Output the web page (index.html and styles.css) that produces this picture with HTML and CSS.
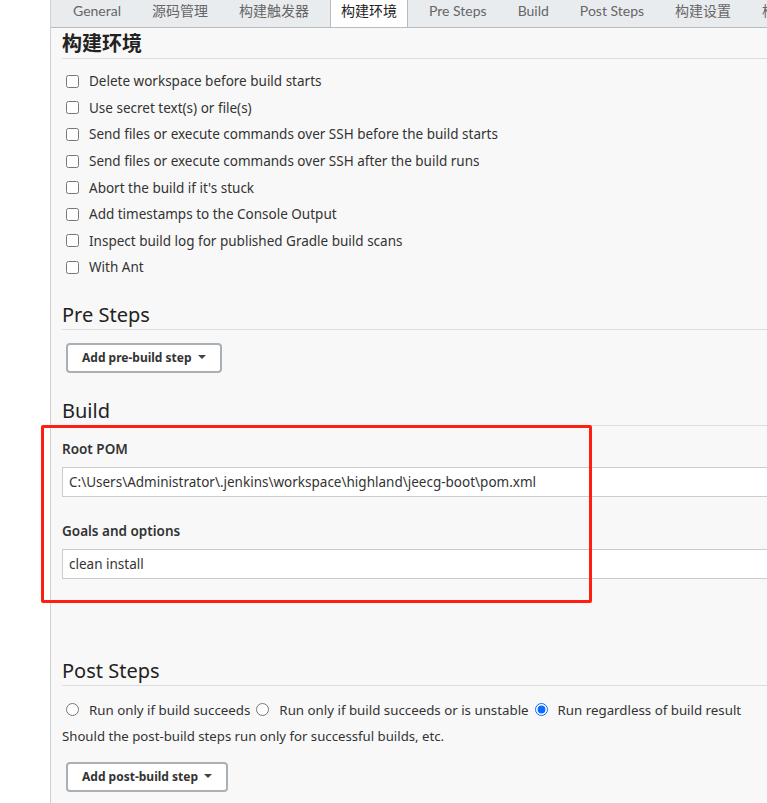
FILE: index.html
```html
<!DOCTYPE html>
<html lang="zh-CN">
<head>
    <meta charset="UTF-8">
    <title>Configure</title>
    <link rel="stylesheet" href="styles.css">
</head>
<body>
    <div class="side"></div>
    <div class="main">
        <div class="tabs">
            <span class="tab">General</span>
            <span class="tab">源码管理</span>
            <span class="tab">构建触发器</span>
            <span class="tab active">构建环境</span>
            <span class="tab">Pre Steps</span>
            <span class="tab">Build</span>
            <span class="tab">Post Steps</span>
            <span class="tab">构建设置</span>
            <span class="tab">构建后操作</span>
        </div>

        <div class="content">
            <h2 class="section-title first">构建环境</h2>
            <ul class="options">
                <li><label><input type="checkbox"> Delete workspace before build starts</label></li>
                <li><label><input type="checkbox"> Use secret text(s) or file(s)</label></li>
                <li><label><input type="checkbox"> Send files or execute commands over SSH before the build starts</label></li>
                <li><label><input type="checkbox"> Send files or execute commands over SSH after the build runs</label></li>
                <li><label><input type="checkbox"> Abort the build if it's stuck</label></li>
                <li><label><input type="checkbox"> Add timestamps to the Console Output</label></li>
                <li><label><input type="checkbox"> Inspect build log for published Gradle build scans</label></li>
                <li><label><input type="checkbox"> With Ant</label></li>
            </ul>

            <h2 class="section-title pre">Pre Steps</h2>
            <button class="add-btn">Add pre-build step <span class="caret"></span></button>

            <h2 class="section-title build">Build</h2>
            <div class="build-fields">
                <div class="field-label">Root POM</div>
                <input class="text-input" type="text" value="C:\Users\Administrator\.jenkins\workspace\highland\jeecg-boot\pom.xml">
                <div class="field-label second">Goals and options</div>
                <input class="text-input" type="text" value="clean install">
                <div class="highlight"></div>
            </div>

            <h2 class="section-title post">Post Steps</h2>
            <div class="radios">
                <label><input type="radio" name="post"> Run only if build succeeds</label>
                <label><input type="radio" name="post"> Run only if build succeeds or is unstable</label>
                <label><input type="radio" name="post" checked> Run regardless of build result</label>
            </div>
            <div class="help">Should the post-build steps run only for successful builds, etc.</div>
            <button class="add-btn post-btn">Add post-build step <span class="caret"></span></button>
        </div>
    </div>
</body>
</html>
```

FILE: styles.css
```css
body {
    margin: 0;
    display: flex;
    height: 803px;
    overflow: hidden;
    font-family: "Noto Sans", "Noto Sans CJK SC", sans-serif;
    font-size: 13.5px;
    color: #333;
    background: #fff;
}
.side {
    width: 50px;
    flex-shrink: 0;
    border-right: 1px solid #cfcfcf;
    background: #fff;
}
.main {
    flex: 1;
    min-width: 0;
    background: #f8f8f8;
}
.tabs {
    display: flex;
    height: 27px;
    padding-left: 12px;
    gap: 11px;
    background: #e9ecef;
    border-bottom: 1px solid #b7bcc1;
    white-space: nowrap;
    overflow: hidden;
}
.tab {
    padding: 0 10px;
    line-height: 21px;
    color: #666;
    font-family: Lato, "Noto Sans CJK SC", sans-serif;
    font-size: 14px;
    flex-shrink: 0;
}
.tab.active {
    background: #fff;
    color: #222;
    border-left: 1px solid #b7bcc1;
    border-right: 1px solid #b7bcc1;
    height: 28px;
}
.content {
    padding-left: 11px;
}
.section-title {
    margin: 0;
    font-size: 20px;
    font-weight: normal;
    line-height: 28px;
    color: #222;
    border-bottom: 1px solid #ddd;
}
.section-title.first {
    margin-top: 2px;
    font-weight: bold;
}
.section-title.pre {
    margin-top: 20px;
}
.section-title.build {
    margin-top: 24px;
}
.section-title.post {
    margin-top: 78px;
}
.options {
    list-style: none;
    margin: 9px 0 0;
    padding: 0;
}
.options li {
    height: 26.6px;
    display: flex;
    align-items: center;
}
label {
    display: inline-flex;
    align-items: center;
    white-space: nowrap;
}
input[type="checkbox"],
input[type="radio"] {
    margin: 0 10px 0 4px;
    width: 13px;
    height: 13px;
    accent-color: #0b6bff;
}
.add-btn {
    display: block;
    box-sizing: border-box;
    margin: 13px 0 0 4px;
    height: 30px;
    padding: 0 14px;
    background: #fff;
    border: 2px solid #a9b0b6;
    border-radius: 4px;
    font-family: inherit;
    font-size: 12px;
    font-weight: bold;
    color: #333;
}
.post-btn {
    margin-top: 16px;
}
.caret {
    display: inline-block;
    margin-left: 3px;
    vertical-align: middle;
    border-left: 4px solid transparent;
    border-right: 4px solid transparent;
    border-top: 4px solid #444;
    position: relative;
    top: -2px;
}
.build-fields {
    position: relative;
    padding-top: 13px;
}
.field-label {
    line-height: 20px;
    font-weight: 600;
    color: #333;
}
.field-label.second {
    margin-top: 24px;
}
.text-input {
    display: block;
    box-sizing: border-box;
    width: calc(100% + 10px);
    height: 30px;
    margin-top: 8px;
    padding: 0 6px;
    border: 1px solid #ccc;
    background: #fff;
    font-family: inherit;
    font-size: 13.5px;
    color: #333;
}
.highlight {
    position: absolute;
    left: -21px;
    top: -1px;
    width: 551px;
    height: 178px;
    box-sizing: border-box;
    border: 3px solid #ff1f12;
    border-radius: 2px;
}
.radios {
    margin-top: 14px;
    height: 20px;
    display: flex;
    align-items: center;
    font-size: 13.3px;
}
.radios label {
    margin-right: 2px;
}
.help {
    margin-top: 6px;
    line-height: 20px;
    font-size: 13.2px;
}
```
